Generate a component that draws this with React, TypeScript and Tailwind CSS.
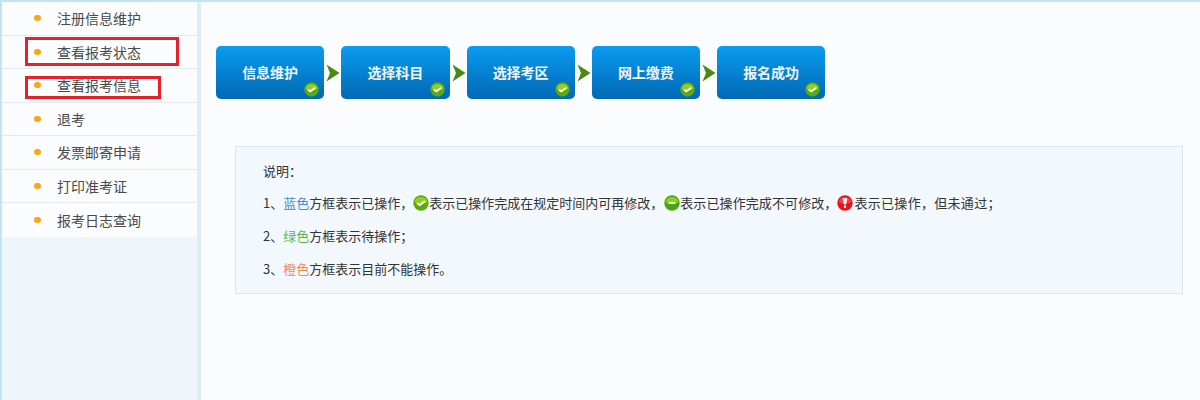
const menu = ["注册信息维护", "查看报考状态", "查看报考信息", "退考", "发票邮寄申请", "打印准考证", "报考日志查询"];
const steps = ["信息维护", "选择科目", "选择考区", "网上缴费", "报名成功"];

function Badge({ kind, size = 16 }: { kind: "ok" | "minus" | "warn"; size?: number }) {
  const outer = kind === "warn" ? "#e8141c" : kind === "minus" ? "#4aa512" : "#56aa12";
  const inner = kind === "warn" ? "#f8444a" : "#a4d820";
  return (
    <svg width={size} height={size} viewBox="0 0 16 16" className="inline-block shrink-0">
      <circle cx="8" cy="8" r="7.7" fill={outer} />
      <path d="M1.6 7a6.5 6 0 0 1 12.8 0a8 5 0 0 1-12.8 0z" fill={inner} opacity="0.8" />
      {kind === "ok" && <path d="M4.6 8.6l2.2 1.5 4.6-3.6" fill="none" stroke="#fff" strokeWidth="1.9" strokeLinecap="round" />}
      {kind === "minus" && <rect x="4.4" y="6.9" width="7.2" height="2.2" rx="1" fill="#e8f8d0" />}
      {kind === "warn" && (
        <>
          <path d="M5.6 3.2h4.8l-1.4 6.2h-2z" fill="#fff" />
          <circle cx="8" cy="11.8" r="1.2" fill="#fff" />
        </>
      )}
    </svg>
  );
}

function Arrow() {
  return (
    <svg width="14" height="18" viewBox="0 0 14 18" className="shrink-0">
      <path d="M0.5 0.5L13.5 9L0.5 17.5L4 9z" fill="#4a8a12" />
    </svg>
  );
}

function Step({ label }: { label: string }) {
  return (
    <div className="relative flex h-[53px] w-[108.25px] shrink-0 items-center justify-center rounded-[5px] bg-gradient-to-b from-[#0a9cf0] to-[#0368b4] text-[14px] font-bold text-[#eef6fc]">
      {label}
      <span className="absolute bottom-[2px] right-[5px] flex">
        <Badge kind="ok" size={15} />
      </span>
    </div>
  );
}

export default function App() {
  return (
    <div
      className="flex h-[400px] w-[1200px] overflow-hidden border-t-2 border-l-2 border-[#bfe6f2] bg-[#fbfcfe] text-[13px] text-[#333333]"
      style={{ fontFamily: '"Noto Sans CJK SC", "Liberation Sans", sans-serif' }}
    >
      <aside className="relative h-full w-[199px] shrink-0 border-r-[4px] border-[#dcedf8] bg-[#eef5fb]">
        <ul className="bg-[#fbfcfd]">
          {menu.map((m, i) => (
            <li
              key={m}
              className={`flex h-[33.5px] items-center pl-[32px] ${i < menu.length - 1 ? "border-b border-[#e6e8ea]" : ""}`}
            >
              <span className="h-[6px] w-[7px] rounded-full bg-[#f5a81c]" />
              <span className="ml-[16px] text-[14px] leading-none text-[#4a4a4a]">{m}</span>
            </li>
          ))}
        </ul>
        <div className="absolute left-[23px] top-[35px] h-[29px] w-[154px] border-[3px] border-[#e4222c]" />
        <div className="absolute left-[23px] top-[74px] h-[23px] w-[136px] border-[3px] border-[#e4222c]" />
      </aside>
      <main className="min-w-0 flex-1 pl-[15px] pt-[44px]">
        <div className="flex items-center gap-[1px]">
          {steps.map((s, i) => (
            <div key={s} className="flex items-center gap-[1px]">
              {i > 0 && (
                <span className="ml-[1px] flex">
                  <Arrow />
                </span>
              )}
              <Step label={s} />
            </div>
          ))}
        </div>
        <section className="ml-[19px] mt-[47px] h-[148px] w-[948px] border border-[#dde6ef] bg-[#f3f8fc] pl-[27px] pt-[8px]">
          <p className="flex h-[31px] items-center whitespace-nowrap">说明：</p>
          <p className="flex h-[33px] items-center whitespace-nowrap">
            1、<span className="text-[#3a8fe0]">蓝色</span>方框表示已操作，
            <Badge kind="ok" />
            表示已操作完成在规定时间内可再修改，
            <span className="ml-[1px] flex">
              <Badge kind="minus" />
            </span>
            <span className="tracking-[0.1px]">表示已操作完成不可修改，</span>
            <span className="mr-[1px] flex">
              <Badge kind="warn" />
            </span>
            <span className="tracking-[0.3px]">表示已操作，但未通过；</span>
          </p>
          <p className="flex h-[33px] items-center whitespace-nowrap">
            2、<span className="text-[#5cb848]">绿色</span>方框表示待操作；
          </p>
          <p className="flex h-[33px] items-center whitespace-nowrap">
            3、<span className="text-[#f0875a]">橙色</span>方框表示目前不能操作。
          </p>
        </section>
      </main>
    </div>
  );
}
